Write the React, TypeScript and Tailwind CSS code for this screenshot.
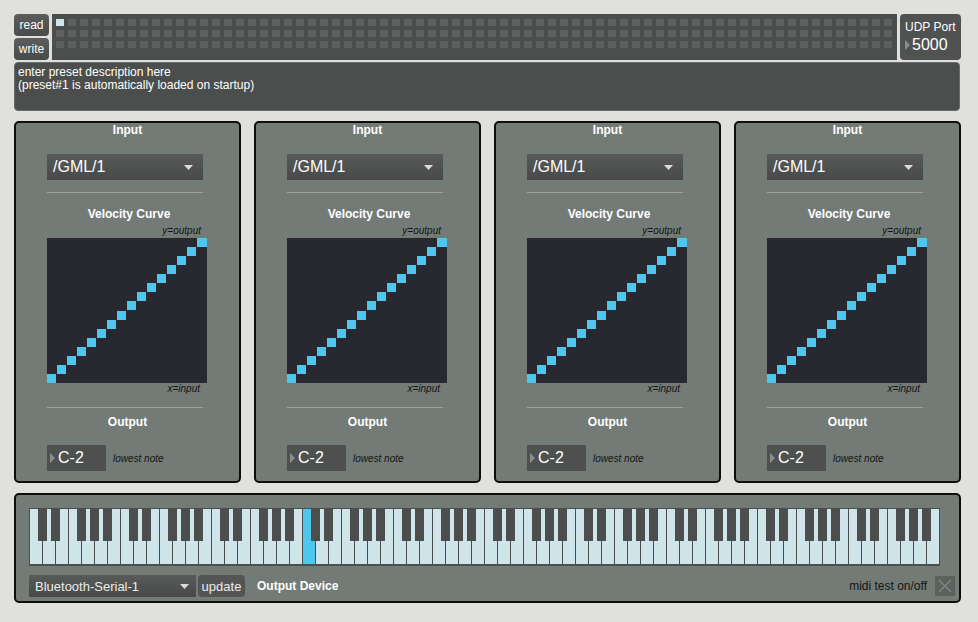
import React from 'react';

const WHITE_KEYS = 70;
const HIGHLIGHT_KEY = 21;
const PRESET_COLS = 70;
const PRESET_ROWS = 3;

const Caret = () => (
    <svg width="9" height="5" viewBox="0 0 9 5">
        <polygon points="0,0 9,0 4.5,5" fill="#dcdcdc" />
    </svg>
);

const Play = () => (
    <svg width="5" height="10" viewBox="0 0 5 10">
        <polygon points="0,0 5,5 0,10" fill="#8a8f8c" />
    </svg>
);

const Curve = () => (
    <svg width="160" height="145" viewBox="0 0 160 145">
        {Array.from({ length: 16 }).map((_, i) => (
            <rect key={i} x={i * 10} y={Math.round(136 - (i * 136) / 15)} width={i === 15 ? 10 : 9} height="9" fill="#4fc6ee" />
        ))}
    </svg>
);

const ChannelPanel: React.FC = () => (
    <div className="w-[227px] h-[362px] rounded-[5px] border-2 border-[#0e0e0e] bg-[#737b77] flex flex-col">
        <div className="h-[14px] leading-[14px] text-center text-[12px] font-bold text-white">Input</div>
        <div className="ml-[31px] mt-[17px] w-[156px] h-[26px] bg-gradient-to-b from-[#575a58] to-[#474a48] flex items-center justify-between pl-[6px] pr-[10px]">
            <span className="text-[16px] leading-none text-white">/GML/1</span>
            <Caret />
        </div>
        <div className="ml-[31px] mt-[12px] w-[156px] h-px bg-[#9da29f]" />
        <div className="mt-[14px] h-[14px] leading-[14px] text-center text-[12px] font-bold text-white pl-[3px]">Velocity Curve</div>
        <div className="ml-[31px] mt-[4px] w-[160px] h-[12px] leading-[12px] text-right pr-[6px] italic text-[10px] text-[#141414]">y=output</div>
        <div className="ml-[31px] mt-px w-[160px] h-[145px] bg-[#272830]">
            <Curve />
        </div>
        <div className="ml-[31px] w-[160px] h-[12px] leading-[12px] text-right pr-[7px] italic text-[10px] text-[#141414]">x=input</div>
        <div className="ml-[31px] mt-[12px] w-[156px] h-px bg-[#9da29f]" />
        <div className="mt-[7px] h-[14px] leading-[14px] text-center text-[12px] font-bold text-white">Output</div>
        <div className="ml-[31px] mt-[16px] flex items-center">
            <div className="w-[59px] h-[26px] bg-[#4d504e] flex items-center pl-[3px] gap-[3px]">
                <Play />
                <span className="text-[16px] leading-none text-white">C-2</span>
            </div>
            <span className="ml-[7px] italic text-[10px] text-[#141414]">lowest note</span>
        </div>
    </div>
);

const Keyboard: React.FC = () => {
    const blacks: number[] = [];
    for (let i = 0; i < WHITE_KEYS - 1; i++) {
        const n = i % 7;
        if (n === 0 || n === 1 || n === 3 || n === 4 || n === 5) blacks.push(i);
    }
    return (
        <div className="relative w-[911px] h-[58px] bg-[#4b4e4c] pt-px pl-px pb-[2px] flex gap-px">
            {Array.from({ length: WHITE_KEYS }).map((_, i) => (
                <div key={i} className={`w-[12px] h-full ${i === HIGHLIGHT_KEY ? 'bg-[#4fc6ee]' : 'bg-[#cfe5ea]'}`} />
            ))}
            {blacks.map(i => (
                <div key={`b${i}`} className="absolute top-0 w-[9px] h-[33px] bg-[#4b4e4c]" style={{ left: 1 + (i + 1) * 13 - 5 }} />
            ))}
        </div>
    );
};

export default function App() {
    return (
        <div className="w-[978px] h-[622px] bg-[#e0e1dc] pl-[14px] pt-[14px] font-['Liberation_Sans',Arial,sans-serif] overflow-hidden">
            <div className="flex h-[46px]">
                <div className="w-[35px] flex flex-col gap-[2px]">
                    <button className="h-[22px] rounded-[4px] bg-gradient-to-b from-[#5a5d5b] to-[#484b49] text-[12px] text-white leading-none">read</button>
                    <button className="h-[22px] rounded-[4px] bg-gradient-to-b from-[#5a5d5b] to-[#484b49] text-[12px] text-white leading-none">write</button>
                </div>
                <div className="ml-[3px] w-[845px] bg-[#4b4e4c] pl-[4px] pt-[5px] flex flex-col gap-[4px]">
                    {Array.from({ length: PRESET_ROWS }).map((_, r) => (
                        <div key={r} className="flex gap-[4px]">
                            {Array.from({ length: PRESET_COLS }).map((_, c) => (
                                <div key={c} className={`w-[8px] h-[7px] ${r === 0 && c === 0 ? 'bg-[#cde6ea]' : 'bg-[#5d605f]'}`} />
                            ))}
                        </div>
                    ))}
                </div>
                <div className="ml-[3px] w-[61px] rounded-[4px] bg-[#4f5251] flex flex-col pl-[5px] pt-[6px]">
                    <span className="text-[12px] leading-[14px] text-white">UDP Port</span>
                    <div className="flex items-center mt-[3px] gap-[2px]">
                        <Play />
                        <span className="text-[16px] leading-none text-white">5000</span>
                    </div>
                </div>
            </div>

            <div className="mt-[2px] w-[946px] h-[49px] rounded-[4px] bg-[#4b4e4c] border border-[#666a68] px-[3px] pt-[3px] text-[12px] leading-[13px] text-white">
                <div>enter preset description here</div>
                <div>(preset#1 is automatically loaded on startup)</div>
            </div>

            <div className="mt-[10px] flex gap-[13px]">
                {Array.from({ length: 4 }).map((_, i) => (
                    <ChannelPanel key={i} />
                ))}
            </div>

            <div className="mt-[10px] w-[947px] h-[110px] rounded-[5px] border-2 border-[#0e0e0e] bg-[#737b77] pl-[13px] pt-[13px]">
                <Keyboard />
                <div className="mt-[9px] w-[926px] h-[22px] flex items-center">
                    <div className="w-[167px] h-[22px] bg-gradient-to-b from-[#575a58] to-[#474a48] flex items-center justify-between pl-[6px] pr-[7px]">
                        <span className="text-[13px] leading-none text-[#ececec]">Bluetooth-Serial-1</span>
                        <Caret />
                    </div>
                    <button className="ml-[2px] w-[47px] h-[22px] rounded-[4px] bg-[#525554] text-[13px] leading-none text-[#ececec]">update</button>
                    <span className="ml-[12px] text-[12px] font-bold text-white">Output Device</span>
                    <span className="ml-auto text-[12px] text-[#141414]">midi test on/off</span>
                    <div className="ml-[8px] w-[20px] h-[20px] bg-[#5c615e] flex items-center justify-center">
                        <svg width="14" height="14" viewBox="0 0 14 14">
                            <line x1="1" y1="1" x2="13" y2="13" stroke="#7f8582" strokeWidth="1.5" />
                            <line x1="13" y1="1" x2="1" y2="13" stroke="#7f8582" strokeWidth="1.5" />
                        </svg>
                    </div>
                </div>
            </div>
        </div>
    );
}
